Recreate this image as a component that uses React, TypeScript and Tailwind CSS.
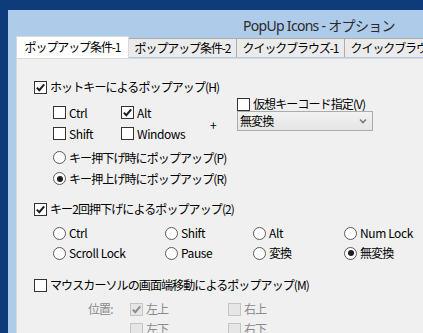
import React from 'react';

const jp = "font-['Noto_Sans_CJK_JP',sans-serif]";

// latin labels look too squeezed with the kana tracking
const track = (s: string) => (/^[\x00-\x7f]+$/.test(s) ? 'tracking-[-0.4px]' : '');

const Box: React.FC<{ checked?: boolean; disabled?: boolean }> = ({ checked, disabled }) => (
  <span
    className={
      disabled
        ? 'w-[13px] h-[13px] border border-[#c4c4c4] bg-[#e6e6e6] flex items-center justify-center shrink-0'
        : 'w-[13px] h-[13px] border border-[#333333] bg-white flex items-center justify-center shrink-0'
    }
  >
    {checked && (
      <svg width="11" height="11" viewBox="0 0 11 11">
        <path d="M1.8 5.6 L4.3 8.2 L9.2 2.4" stroke={disabled ? '#8c8c8c' : '#1e1e1e'} strokeWidth="2" fill="none" />
      </svg>
    )}
  </span>
);

const Radio: React.FC<{ checked?: boolean }> = ({ checked }) => (
  <span className="w-[13px] h-[13px] rounded-full border border-[#5a5a5a] bg-white flex items-center justify-center shrink-0">
    {checked && <span className="w-[6px] h-[6px] rounded-full bg-[#1e1e1e]" />}
  </span>
);

const Check: React.FC<{ label: string; checked?: boolean; disabled?: boolean; className?: string }> = ({ label, checked, disabled, className }) => (
  <div className={`flex items-center gap-[3px] ${className ?? ''}`}>
    <Box checked={checked} disabled={disabled} />
    <span className={`${track(label)} ${disabled ? 'text-[#8a8a8a]' : ''}`}>{label}</span>
  </div>
);

const Opt: React.FC<{ label: string; checked?: boolean }> = ({ label, checked }) => (
  <div className="flex items-center gap-[3px] h-[20px]">
    <Radio checked={checked} />
    <span className={track(label)}>{label}</span>
  </div>
);

export default function App() {
  const tabs = ['ポップアップ条件-2', 'クイックブラウズ-1', 'クイックブラウズ-2'];

  return (
    <div className={`w-[423px] h-[333px] overflow-hidden bg-[#0e3c7b] pt-[10px] pl-[8px] ${jp}`}>
      <div className="w-[600px] h-full bg-[#afcbea] flex flex-col">
        {/* title bar */}
        <div className="h-[30px] flex items-center pl-[235px] pt-[5px]">
          <span className="text-[14px] text-[#2a2a2a] font-['Noto_Sans','Noto_Sans_CJK_JP',sans-serif] tracking-[-0.7px]">
            PopUp Icons - オプション
          </span>
        </div>

        {/* tabs */}
        <div className="h-[22px] flex items-end pl-[8px] text-[12px] tracking-[-1.1px] text-black">
          <div className="w-[113px] h-[22px] bg-white border-t border-l border-r border-[#d9d9d9] flex items-center justify-center pb-[1px] shrink-0">
            ポップアップ条件-1
          </div>
          {tabs.map((t) => (
            <div
              key={t}
              className="w-[108px] h-[19px] mb-[1px] bg-[#ebebeb] border-t border-r border-[#acacac] flex items-center justify-center shrink-0"
            >
              {t}
            </div>
          ))}
        </div>

        {/* panel */}
        <div className="flex-1 ml-[8px] bg-[#f0f0f0] border-l border-t border-[#d9d9d9] pl-[17px] pt-[18px] text-[12px] tracking-[-0.9px] text-black">
          <Check label="ホットキーによるポップアップ(H)" checked className="h-[20px]" />

          <div className="flex h-[46px] pl-[19px]">
            <div className="grid grid-cols-[68px_68px] grid-rows-[21px_21px] pt-[5px]">
              <Check label="Ctrl" />
              <Check label="Alt" checked />
              <Check label="Shift" />
              <Check label="Windows" />
            </div>
            <div className="w-[48px] flex items-center pl-[21px] pt-[9px]">+</div>
            <div className="flex flex-col">
              <Check label="仮想キーコード指定(V)" className="h-[14px]" />
              <div className="w-[136px] h-[20px] border border-[#acacac] bg-gradient-to-b from-[#f2f2f2] to-[#e5e5e5] flex items-center justify-between pl-[2px] pr-[5px]">
                <span>無変換</span>
                <svg width="8" height="6" viewBox="0 0 8 6">
                  <path d="M1 1.5 L4 4.5 L7 1.5" stroke="#7a7a7a" strokeWidth="1.6" fill="none" />
                </svg>
              </div>
            </div>
          </div>

          <div className="pl-[19px] pt-[4px] flex flex-col">
            <div className="h-[21px] flex items-center"><Opt label="キー押下げ時にポップアップ(P)" /></div>
            <div className="h-[21px] flex items-center"><Opt label="キー押上げ時にポップアップ(R)" checked /></div>
          </div>

          <Check label="キー2回押下げによるポップアップ(2)" checked className="h-[20px] mt-[10px]" />

          <div className="pl-[19px] pt-[4px] grid grid-cols-[112px_88px_91px_100px] grid-rows-[20px_20px]">
            <Opt label="Ctrl" />
            <Opt label="Shift" />
            <Opt label="Alt" />
            <Opt label="Num Lock" />
            <Opt label="Scroll Lock" />
            <Opt label="Pause" />
            <Opt label="変換" />
            <Opt label="無変換" checked />
          </div>

          <Check label="マウスカーソルの画面端移動によるポップアップ(M)" className="h-[20px] mt-[12px]" />

          <div className="flex pl-[54px] pt-[4px]">
            <span className="w-[42px] h-[20px] flex items-center text-[#8a8a8a]">位置:</span>
            <div className="grid grid-cols-[98px_98px] grid-rows-[20px_20px]">
              <Check label="左上" checked disabled />
              <Check label="右上" disabled />
              <Check label="左下" disabled />
              <Check label="右下" disabled />
            </div>
          </div>
        </div>
      </div>
    </div>
  );
}
